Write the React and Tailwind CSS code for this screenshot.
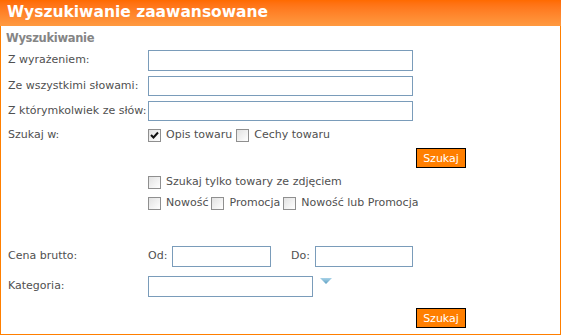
import React from 'react'

const font = { fontFamily: '"DejaVu Sans", Verdana, sans-serif' }

function Box({ checked }) {
  return (
    <span className="inline-flex items-center justify-center w-[13px] h-[13px] border border-[#8f8f8f] bg-gradient-to-br from-[#e2e2e2] to-white shrink-0">
      {checked && (
        <svg width="9" height="9" viewBox="0 0 9 9">
          <path d="M1 4 L3.5 6.5 L8 1.5" fill="none" stroke="#111" strokeWidth="2" />
        </svg>
      )}
    </span>
  )
}

function Check({ label, checked }) {
  return (
    <span className="inline-flex items-center gap-[5px]">
      <Box checked={checked} />
      <span>{label}</span>
    </span>
  )
}

function Field({ w = 'w-[265px]', h = 'h-[21px]' }) {
  return <input type="text" className={`${w} ${h} border border-[#7a9cba] bg-white outline-none`} />
}

function Btn() {
  return (
    <button className="w-[50px] h-[20px] bg-[#ff7f00] border border-black text-white text-[11px] leading-none">
      Szukaj
    </button>
  )
}

export default function App() {
  return (
    <div className="w-[562px] h-[336px] bg-white text-[11px] text-[#505050]" style={font}>
      <div className="w-[561px] h-[335px] border border-[#ff7f00] border-t-0 flex flex-col">
        <div className="h-[26px] bg-gradient-to-b from-[#ff6a00] to-[#ff9a40] flex items-center px-[7px] -mx-px">
          <span className="text-white font-bold text-[15.5px]">Wyszukiwanie zaawansowane</span>
        </div>
        <div className="pl-[5px] pt-[4px] h-[24px] font-bold text-[11.5px] tracking-[-0.3px] text-[#858585]">Wyszukiwanie</div>

        <div className="flex items-center h-[21px]">
          <span className="w-[147px] pl-[7px]">Z wyrażeniem:</span>
          <Field />
        </div>
        <div className="flex items-center h-[20px] mt-[5px]">
          <span className="w-[147px] pl-[7px]">Ze wszystkimi słowami:</span>
          <Field h="h-[20px]" />
        </div>
        <div className="flex items-center h-[20px] mt-[5px]">
          <span className="w-[147px] pl-[7px]">Z którymkolwiek ze słów:</span>
          <Field h="h-[20px]" />
        </div>

        <div className="flex items-center h-[14px] mt-[7px]">
          <span className="w-[147px] pl-[7px]">Szukaj w:</span>
          <span className="flex gap-[4px]">
            <Check label="Opis towaru" checked />
            <Check label="Cechy towaru" />
          </span>
        </div>

        <div className="flex justify-end pr-[94px] mt-[6px]">
          <Btn />
        </div>

        <div className="flex items-center h-[14px] mt-[7px] pl-[147px]">
          <Check label="Szukaj tylko towary ze zdjęciem" />
        </div>
        <div className="flex items-center h-[14px] mt-[7px] pl-[147px] gap-[3px]">
          <Check label="Nowość" />
          <Check label="Promocja" />
          <Check label="Nowość lub Promocja" />
        </div>

        <div className="flex items-center h-[21px] mt-[36px]">
          <span className="w-[147px] pl-[7px]">Cena brutto:</span>
          <span className="w-[24px]">Od:</span>
          <Field w="w-[99px]" />
          <span className="ml-[20px] w-[24px]">Do:</span>
          <Field w="w-[98px]" />
        </div>

        <div className="flex items-center h-[21px] mt-[9px]">
          <span className="w-[147px] pl-[7px]">Kategoria:</span>
          <Field w="w-[165px]" />
          <svg width="12" height="7" viewBox="0 0 12 7" className="ml-[7px] -mt-[10px]">
            <defs>
              <linearGradient id="tri" x1="0" y1="0" x2="0" y2="1">
                <stop offset="0" stopColor="#a9d3e8" />
                <stop offset="1" stopColor="#5c9fc2" />
              </linearGradient>
            </defs>
            <path d="M0 0 H12 L6 6 Z" fill="url(#tri)" />
          </svg>
        </div>

        <div className="flex justify-end pr-[94px] mt-[11px]">
          <Btn />
        </div>
      </div>
    </div>
  )
}
